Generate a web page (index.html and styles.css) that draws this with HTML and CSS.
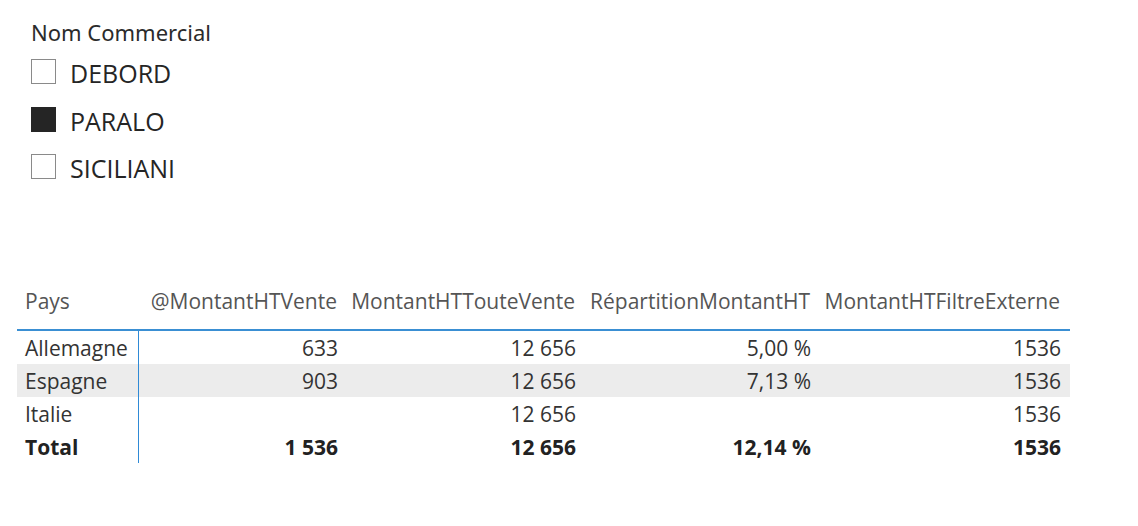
FILE: index.html
```html
<!DOCTYPE html>
<html lang="fr">
<head>
<meta charset="utf-8">
<title>Rapport</title>
<link rel="stylesheet" href="styles.css">
</head>
<body>
<section class="slicer">
  <h2 class="slicer-title">Nom Commercial</h2>
  <ul class="slicer-list">
    <li class="slicer-item"><span class="box"></span><span class="label">DEBORD</span></li>
    <li class="slicer-item"><span class="box checked"></span><span class="label">PARALO</span></li>
    <li class="slicer-item"><span class="box"></span><span class="label">SICILIANI</span></li>
  </ul>
</section>
<section class="matrix">
  <table class="grid">
    <colgroup>
      <col class="c1"><col class="c2"><col class="c3"><col class="c4"><col class="c5">
    </colgroup>
    <thead>
      <tr>
        <th class="left">Pays</th>
        <th>@MontantHTVente</th>
        <th>MontantHTTouteVente</th>
        <th>RépartitionMontantHT</th>
        <th>MontantHTFiltreExterne</th>
      </tr>
    </thead>
    <tbody>
      <tr>
        <td class="left">Allemagne</td><td>633</td><td>12 656</td><td>5,00 %</td><td>1536</td>
      </tr>
      <tr class="alt">
        <td class="left">Espagne</td><td>903</td><td>12 656</td><td>7,13 %</td><td>1536</td>
      </tr>
      <tr>
        <td class="left">Italie</td><td></td><td>12 656</td><td></td><td>1536</td>
      </tr>
      <tr class="total">
        <td class="left">Total</td><td>1 536</td><td>12 656</td><td>12,14 %</td><td>1536</td>
      </tr>
    </tbody>
  </table>
</section>
</body>
</html>
```
FILE: styles.css
```css
html, body {
  margin: 0;
  padding: 0;
  background: #ffffff;
}
body {
  width: 1138px;
  height: 526px;
  overflow: hidden;
  font-family: "Open Sans", "Noto Sans", sans-serif;
  color: #333333;
}
.slicer {
  padding: 18px 0 0 31px;
}
.slicer-title {
  margin: 0;
  font-family: "Noto Sans", "Open Sans", sans-serif;
  font-weight: 400;
  font-size: 22px;
  line-height: 28px;
  color: #2b2b2b;
}
.slicer-list {
  list-style: none;
  margin: 0;
  padding: 2px 0 0 0;
  display: flex;
  flex-direction: column;
}
.slicer-item {
  display: flex;
  align-items: center;
  gap: 14px;
  height: 47.5px;
}
.box {
  box-sizing: border-box;
  width: 25px;
  height: 25px;
  border: 1px solid #8a8a8a;
  background: #ffffff;
}
.box.checked {
  background: #252525;
  border-color: #252525;
}
.label {
  font-size: 25px;
  line-height: 34px;
  margin-top: 3px;
  color: #252525;
}
.matrix {
  padding: 89px 0 0 17px;
}
.grid {
  border-collapse: separate;
  border-spacing: 0;
  table-layout: fixed;
  width: 1053px;
  font-size: 21px;
}
.c1 { width: 122px; }
.c2 { width: 208px; }
.c3 { width: 238px; }
.c4 { width: 235px; }
.c5 { width: 250px; }
.grid th {
  font-weight: 400;
  color: #555555;
  text-align: right;
  white-space: nowrap;
  height: 35px;
  padding: 0 10px 14px 0;
  vertical-align: bottom;
  border-bottom: 2px solid #3a8fd3;
}
.grid td {
  text-align: right;
  white-space: nowrap;
  height: 31px;
  padding: 2px 9px 0 0;
  color: #333333;
}
.grid .left {
  text-align: left;
  padding-left: 8px;
}
.grid tbody td.left {
  border-right: 1px solid #2f8ad6;
}
.grid tr.alt td {
  background: #ececec;
}
.grid tr.total td {
  font-weight: 700;
  color: #222222;
}
```
